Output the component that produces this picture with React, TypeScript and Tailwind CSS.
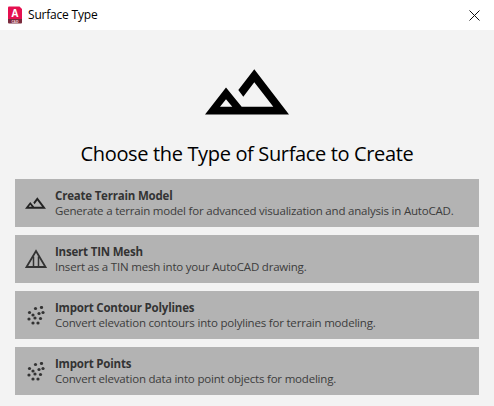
const FONT = "font-['Open_Sans','Noto_Sans',sans-serif]";

function AppLogo() {
  return (
    <svg width="16" height="18" viewBox="0 0 16 18" className="block">
      <path d="M1 1.5 Q1 0.5 2 0.5 H12.5 L15 3 V13 H1 Z" fill="#e51050" />
      <path d="M1 13 H15 V16.5 Q15 17.5 14 17.5 H2 Q1 17.5 1 16.5 Z" fill="#7a2a3c" />
      <text x="8" y="10.5" textAnchor="middle" fontSize="10" fontWeight="700" fill="#fff" fontFamily="Open Sans">A</text>
      <text x="8" y="16.5" textAnchor="middle" fontSize="3.5" fontWeight="700" fill="#f3d5dc" fontFamily="Open Sans">CAD</text>
    </svg>
  );
}

function TerrainIcon({ className }: { className?: string }) {
  return (
    <svg viewBox="0 0 84 46" className={className}>
      <path
        fillRule="evenodd"
        fill="#000"
        d="M0 45.5 L21 18.5 L36.7 37.7 H68.3 L49.3 13.3 L38.3 27.7 L33.3 21 L49.3 0.3 L84 45.5 Z M21 30.3 L15 37.7 H27.3 Z"
      />
    </svg>
  );
}

function TinIcon() {
  return (
    <svg width="22" height="20" viewBox="0 0 22 20" className="block">
      <path d="M11 2 L20.5 18 H1.5 Z" fill="none" stroke="#333" strokeWidth="1.8" strokeLinejoin="miter" />
      <path d="M8.5 7.5 V18 M13.5 7.5 V18" stroke="#333" strokeWidth="1.5" />
    </svg>
  );
}

function PointsIcon() {
  const dots = [
    [2.5, 6.5], [8.5, 2.5], [14.5, 1.5], [6, 9], [12, 7.5], [16, 6.5],
    [2, 13], [8, 12], [13.5, 12.5], [6, 17], [11, 17],
  ];
  return (
    <svg width="18" height="19" viewBox="0 0 18 19" className="block">
      {dots.map(([cx, cy]) => (
        <circle key={`${cx}-${cy}`} cx={cx} cy={cy} r="1.6" fill="#333" />
      ))}
    </svg>
  );
}

const OPTIONS = [
  {
    title: "Create Terrain Model",
    desc: "Generate a terrain model for advanced visualization and analysis in AutoCAD.",
    icon: <TerrainIcon className="block w-[21px] h-[12px] opacity-80" />,
  },
  {
    title: "Insert TIN Mesh",
    desc: "Insert as a TIN mesh into your AutoCAD drawing.",
    icon: <TinIcon />,
  },
  {
    title: "Import Contour Polylines",
    desc: "Convert elevation contours into polylines for terrain modeling.",
    icon: <PointsIcon />,
  },
  {
    title: "Import Points",
    desc: "Convert elevation data into point objects for modeling.",
    icon: <PointsIcon />,
  },
];

export default function App() {
  return (
    <div className={`w-[494px] h-[406px] flex flex-col bg-[#f3f3f3] overflow-hidden ${FONT}`}>
      <div className="h-[30px] bg-white flex items-center pl-[7px] shrink-0">
        <AppLogo />
        <span className="ml-[5px] text-[12px] text-black tracking-[-0.2px]">Surface Type</span>
        <svg width="11" height="11" viewBox="0 0 11 11" className="ml-auto mr-[14px]">
          <path d="M0.5 0.5 L10.5 10.5 M10.5 0.5 L0.5 10.5" stroke="#111" strokeWidth="1" />
        </svg>
      </div>

      <div className="flex justify-center pt-[39px]">
        <TerrainIcon className="block w-[84px] h-[46px]" />
      </div>

      <h1 className="mt-[24px] text-center text-[20px] leading-[30px] font-normal text-black tracking-[-0.35px]">
        Choose the Type of Surface to Create
      </h1>

      <div className="mt-[10px] mx-[15px] flex flex-col gap-[8px]">
        {OPTIONS.map((opt) => (
          <div key={opt.title} className="h-[48px] bg-[#b3b3b3] flex items-center">
            <div className="w-[40px] flex justify-center pl-[1px] shrink-0">{opt.icon}</div>
            <div className="text-[11.5px] leading-[15px] text-[#3c3c3c] whitespace-nowrap tracking-[-0.2px]">
              <div className="font-bold text-[#333]">{opt.title}</div>
              <div>{opt.desc}</div>
            </div>
          </div>
        ))}
      </div>
    </div>
  );
}
